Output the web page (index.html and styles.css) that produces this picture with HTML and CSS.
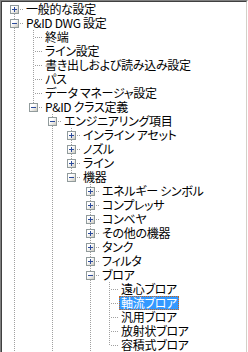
FILE: index.html
```html
<!DOCTYPE html>
<html lang="ja">
 <head>
  <meta charset="utf-8">
  <title>P&amp;ID 設定ツリー</title>
  <link rel="stylesheet" href="styles.css">
 </head>
 <body>
  <div class="frame">
   <div class="tree">
    <div class="row"><span class="c f"><span class="b p"></span></span><span class="lb">一般的な設定</span></div>
    <div class="row"><span class="c t"><span class="b m"></span></span><span class="lb">P&amp;ID DWG 設定</span></div>
    <div class="row"><span class="c v"></span><span class="c t"></span><span class="lb">終端</span></div>
    <div class="row"><span class="c v"></span><span class="c t"></span><span class="lb">ライン設定</span></div>
    <div class="row"><span class="c v"></span><span class="c t"></span><span class="lb">書き出しおよび読み込み設定</span></div>
    <div class="row"><span class="c v"></span><span class="c t"></span><span class="lb">パス</span></div>
    <div class="row"><span class="c v"></span><span class="c t"></span><span class="lb">データ マネージャ設定</span></div>
    <div class="row"><span class="c v"></span><span class="c l"><span class="b m"></span></span><span class="lb">P&amp;ID クラス定義</span></div>
    <div class="row"><span class="c v"></span><span class="c"></span><span class="c t"><span class="b m"></span></span><span class="lb">エンジニアリング項目</span></div>
    <div class="row"><span class="c v"></span><span class="c"></span><span class="c v"></span><span class="c t"><span class="b p"></span></span><span class="lb">インライン アセット</span></div>
    <div class="row"><span class="c v"></span><span class="c"></span><span class="c v"></span><span class="c t"><span class="b p"></span></span><span class="lb">ノズル</span></div>
    <div class="row"><span class="c v"></span><span class="c"></span><span class="c v"></span><span class="c t"><span class="b p"></span></span><span class="lb">ライン</span></div>
    <div class="row"><span class="c v"></span><span class="c"></span><span class="c v"></span><span class="c l"><span class="b m"></span></span><span class="lb">機器</span></div>
    <div class="row"><span class="c v"></span><span class="c"></span><span class="c v"></span><span class="c"></span><span class="c t"><span class="b p"></span></span><span class="lb">エネルギー シンボル</span></div>
    <div class="row"><span class="c v"></span><span class="c"></span><span class="c v"></span><span class="c"></span><span class="c t"><span class="b p"></span></span><span class="lb">コンプレッサ</span></div>
    <div class="row"><span class="c v"></span><span class="c"></span><span class="c v"></span><span class="c"></span><span class="c t"><span class="b p"></span></span><span class="lb">コンベヤ</span></div>
    <div class="row"><span class="c v"></span><span class="c"></span><span class="c v"></span><span class="c"></span><span class="c t"><span class="b p"></span></span><span class="lb">その他の機器</span></div>
    <div class="row"><span class="c v"></span><span class="c"></span><span class="c v"></span><span class="c"></span><span class="c t"><span class="b p"></span></span><span class="lb">タンク</span></div>
    <div class="row"><span class="c v"></span><span class="c"></span><span class="c v"></span><span class="c"></span><span class="c t"><span class="b p"></span></span><span class="lb">フィルタ</span></div>
    <div class="row"><span class="c v"></span><span class="c"></span><span class="c v"></span><span class="c"></span><span class="c t"><span class="b m"></span></span><span class="lb">ブロア</span></div>
    <div class="row"><span class="c v"></span><span class="c"></span><span class="c v"></span><span class="c"></span><span class="c v"></span><span class="c t"></span><span class="lb">遠心ブロア</span></div>
    <div class="row"><span class="c v"></span><span class="c"></span><span class="c v"></span><span class="c"></span><span class="c v"></span><span class="c t"></span><span class="lb sel">軸流ブロア</span></div>
    <div class="row"><span class="c v"></span><span class="c"></span><span class="c v"></span><span class="c"></span><span class="c v"></span><span class="c t"></span><span class="lb">汎用ブロア</span></div>
    <div class="row"><span class="c v"></span><span class="c"></span><span class="c v"></span><span class="c"></span><span class="c v"></span><span class="c t"></span><span class="lb">放射状ブロア</span></div>
    <div class="row"><span class="c v"></span><span class="c"></span><span class="c v"></span><span class="c"></span><span class="c v"></span><span class="c l"></span><span class="lb">容積式ブロア</span></div>
   </div>
  </div>
 </body>
</html>
```

FILE: styles.css
```css
html, body {
    margin: 0;
    background: #ffffff;
    overflow: hidden;
}

/* sunken 3d edge: outer pair */
div.frame {
    width: 248px;
    height: 360px;
    box-sizing: border-box;
    border-top: 1px solid #808080;
    border-left: 1px solid #808080;
    border-right: 1px solid #ffffff;
}

/* inner pair */
div.tree {
    height: 100%;
    border-top: 1px solid #404040;
    border-left: 1px solid #404040;
    border-right: 1px solid #d4d0c8;
    padding-left: 3px;
    background: #ffffff;
    color: #000000;
    font-family: "Noto Sans CJK JP", "Noto Sans", sans-serif;
    font-size: 12px;
    font-feature-settings: "palt";
    letter-spacing: -0.3px;
}

div.row {
    display: flex;
    height: 14px;
    white-space: nowrap;
}

/* one indent step */
span.c {
    flex: none;
    width: 19px;
    height: 14px;
}

span.v {
    background: repeating-linear-gradient(#a0a0a0 0 1px, transparent 1px 2px) 9px 0 / 1px 14px no-repeat;
}

span.t {
    background:
	repeating-linear-gradient(to right, #a0a0a0 0 1px, transparent 1px 2px) 11px 7px / 8px 1px no-repeat,
	repeating-linear-gradient(#a0a0a0 0 1px, transparent 1px 2px) 9px 0 / 1px 14px no-repeat;
}

span.l {
    background:
	repeating-linear-gradient(to right, #a0a0a0 0 1px, transparent 1px 2px) 11px 7px / 8px 1px no-repeat,
	repeating-linear-gradient(#a0a0a0 0 1px, transparent 1px 2px) 9px 0 / 1px 8px no-repeat;
}

span.f {
    background:
	repeating-linear-gradient(to right, #a0a0a0 0 1px, transparent 1px 2px) 11px 7px / 8px 1px no-repeat,
	repeating-linear-gradient(#a0a0a0 0 1px, transparent 1px 2px) 9px 8px / 1px 6px no-repeat;
}

/* expand / collapse box */
span.b {
    display: block;
    width: 9px;
    height: 9px;
    box-sizing: border-box;
    margin: 3px 0 0 5px;
    border: 1px solid #919b9c;
}

span.m {
    background:
	linear-gradient(#2c4b9b, #2c4b9b) 1px 3px / 5px 1px no-repeat,
	linear-gradient(135deg, #ffffff 35%, #cdcac0);
}

span.p {
    background:
	linear-gradient(#2c4b9b, #2c4b9b) 1px 3px / 5px 1px no-repeat,
	linear-gradient(#2c4b9b, #2c4b9b) 3px 1px / 1px 5px no-repeat,
	linear-gradient(135deg, #ffffff 35%, #cdcac0);
}

span.lb {
    height: 14px;
    line-height: 14px;
    padding: 0 2px;
}

span.sel {
    background: #3399ff;
    color: #ffffff;
    outline: 1px dotted #c8641e;
    outline-offset: -1px;
}
```
